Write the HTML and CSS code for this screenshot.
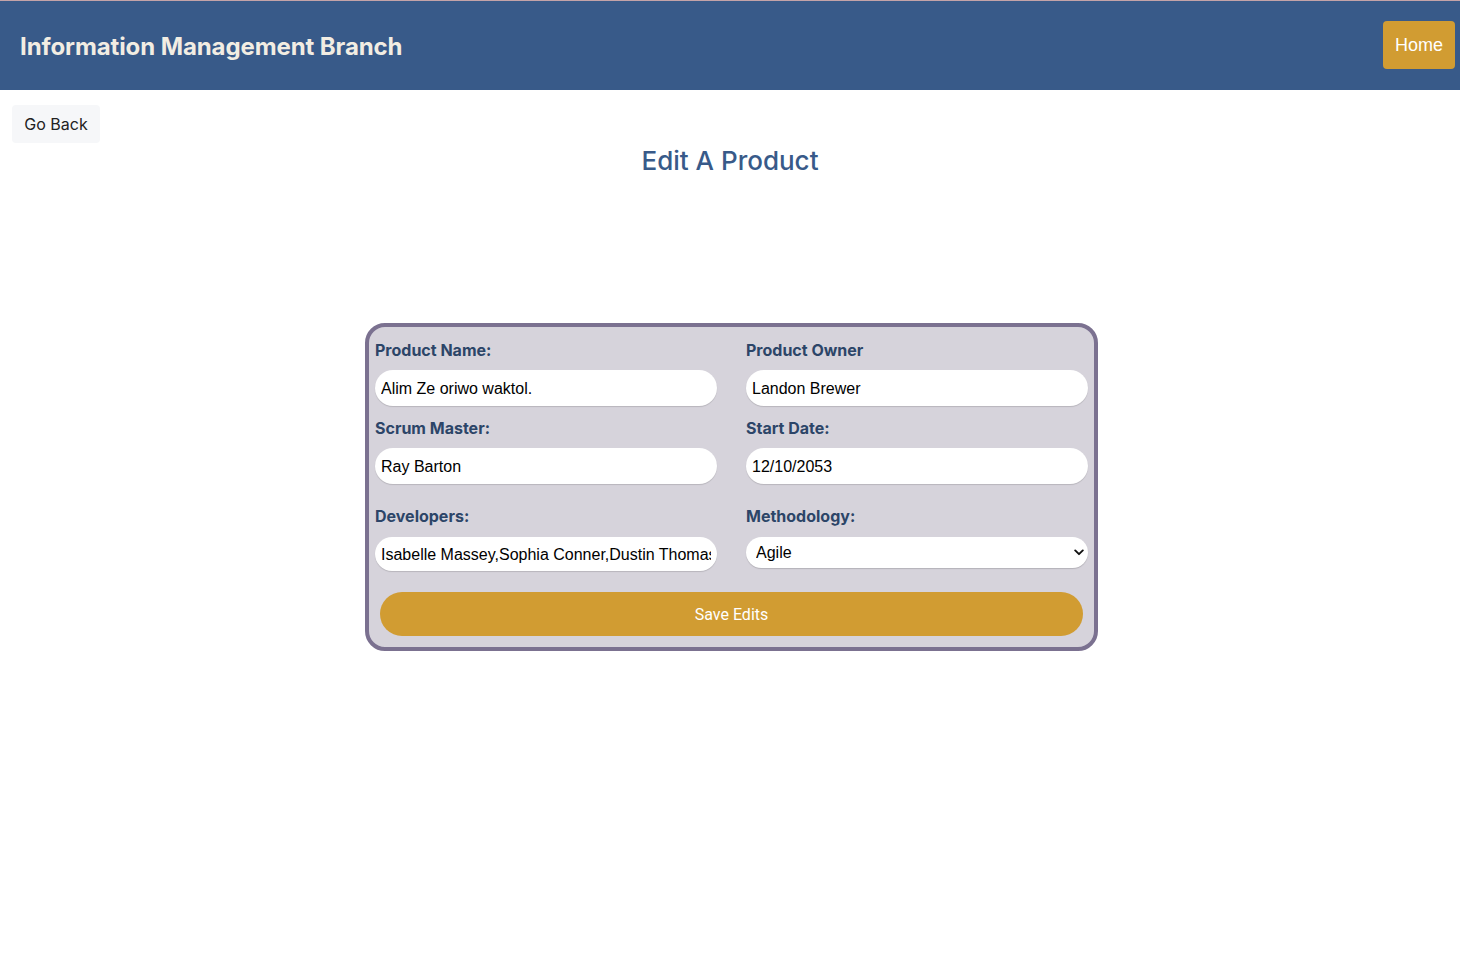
FILE: index.html
```html
<!DOCTYPE html>
<html lang="en">
<head>
<meta charset="utf-8">
<title>Edit A Product</title>
<link rel="stylesheet" href="styles.css">
</head>
<body>
<header class="topbar">
  <h1 class="brand">Information Management Branch</h1>
  <button class="home-btn">Home</button>
</header>
<main class="page">
  <div class="back-row"><button class="back-btn">Go Back</button></div>
  <h2 class="page-title">Edit A Product</h2>
  <form class="card">
    <div class="grid">
      <div class="field">
        <label class="lbl">Product Name:</label>
        <input class="inp" type="text" value="Alim Ze oriwo waktol.">
      </div>
      <div class="field">
        <label class="lbl">Product Owner</label>
        <input class="inp" type="text" value="Landon Brewer">
      </div>
      <div class="field">
        <label class="lbl">Scrum Master:</label>
        <input class="inp" type="text" value="Ray Barton">
      </div>
      <div class="field">
        <label class="lbl">Start Date:</label>
        <input class="inp" type="text" value="12/10/2053">
      </div>
      <div class="field field-last">
        <label class="lbl">Developers:</label>
        <input class="inp inp-dev" type="text" value="Isabelle Massey,Sophia Conner,Dustin Thomas">
      </div>
      <div class="field field-last">
        <label class="lbl">Methodology:</label>
        <div class="sel-wrap">
          <select class="sel"><option>Agile</option><option>Waterfall</option></select>
          <svg class="chev" width="10" height="7" viewBox="0 0 10 7"><path d="M1.2 1.4 L5 5.2 L8.8 1.4" fill="none" stroke="#111" stroke-width="1.9" stroke-linecap="round" stroke-linejoin="round"/></svg>
        </div>
      </div>
    </div>
    <button type="button" class="save-btn">Save Edits</button>
  </form>
</main>
</body>
</html>
```
FILE: styles.css
```css
* { box-sizing: border-box; }
html, body { margin: 0; padding: 0; background: #ffffff; }
body { font-family: "Liberation Sans", Arial, sans-serif; }

.topbar {
  height: 90px;
  background: #385a89;
  border-top: 1px solid #c4a3a8;
  display: flex;
  align-items: center;
  justify-content: space-between;
  padding: 1px 5px 0 20px;
}
.brand {
  margin: 0;
  font-family: Inter, "Noto Sans", sans-serif;
  font-weight: 700;
  font-size: 24px;
  letter-spacing: -0.1px;
  color: #f2ede3;
}
.home-btn {
  width: 72px;
  height: 48px;
  border: none;
  border-radius: 4px;
  background: #d19c32;
  color: #ffffff;
  font-family: "Liberation Sans", Arial, sans-serif;
  font-size: 18px;
  padding: 2px 0 0;
  margin-bottom: 3px;
}

.page { padding: 15px 12px 0; }
.back-row { display: flex; }
.back-btn {
  width: 88px;
  height: 38px;
  border: none;
  border-radius: 4px;
  background: #f6f7f9;
  color: #222;
  font-family: Inter, Roboto, sans-serif;
  font-size: 16px;
  padding: 0;
}
.page-title {
  margin: 0;
  margin-top: 1px;
  text-align: center;
  font-family: Inter, Roboto, sans-serif;
  font-weight: 500;
  font-size: 26px;
  line-height: 34px;
  color: #385a89;
}

.card {
  width: 733px;
  margin: 145px auto 0;
  margin-left: 353px;
  background: #d6d3db;
  border: 4px solid #7b7190;
  border-radius: 20px;
  padding: 13px 6px 11px;
}
.grid {
  display: grid;
  grid-template-columns: 342px 342px;
  column-gap: 29px;
  row-gap: 12px;
}
.field { display: flex; flex-direction: column; }
.field-last { margin-top: 10px; }
.lbl {
  font-family: Inter, "Noto Sans", sans-serif;
  font-weight: 700;
  font-size: 16px;
  line-height: 20px;
  color: #2c4568;
  margin-bottom: 10px;
}
.inp {
  height: 36px;
  border: none;
  border-radius: 18px;
  background: #fff;
  box-shadow: 0 1px 1px rgba(0,0,0,0.14);
  padding: 1px 6px 0;
  font-family: "Liberation Sans", Arial, sans-serif;
  font-size: 16px;
  color: #000;
  outline: none;
}
.inp-dev { height: 34px; margin-top: 1px; }
.sel-wrap { position: relative; }
.sel {
  width: 342px;
  height: 31px;
  margin-top: 1px;
  appearance: none;
  -webkit-appearance: none;
  border: none;
  border-radius: 16px;
  background: #fff;
  box-shadow: 0 1px 1px rgba(0,0,0,0.16);
  padding: 0 6px 0 10px;
  font-family: "Liberation Sans", Arial, sans-serif;
  font-size: 16px;
  color: #000;
}
.chev { position: absolute; right: 4px; top: 13px; }

.save-btn {
  display: block;
  width: 703px;
  height: 44px;
  margin: 21px auto 0;
  border: none;
  border-radius: 22px;
  background: #d19c32;
  color: #fff;
  font-family: Roboto, Inter, sans-serif;
  font-size: 16px;
}
```
